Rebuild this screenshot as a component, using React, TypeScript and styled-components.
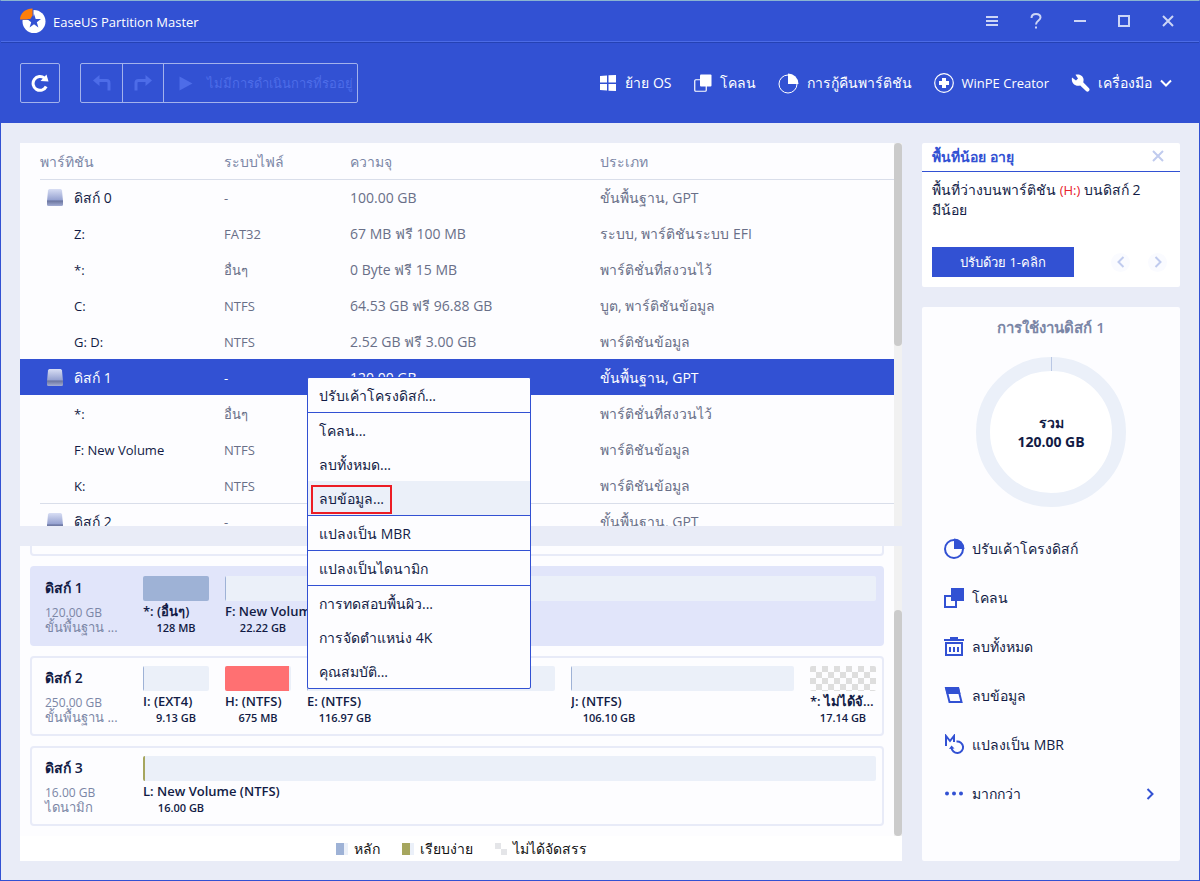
import React from "react";
import styled, { createGlobalStyle, css } from "styled-components";

const color = {
  brand: "#3251d3",
  canvas: "#e9ecf7",
  panel: "#fdfdff",
  track: "#ebf0f9",
  ink: "#121b45",
  body: "#696f88",
  muted: "#7b86a6",
  line: "#d9deea",
  used: "#9eb2d6",
  simple: "#a6a65e",
  warn: "#ff7072",
};

const GlobalStyle = createGlobalStyle`
  *, *::before, *::after { box-sizing: border-box; }
  body {
    margin: 0;
    font-family: "Open Sans", "Noto Sans", sans-serif;
    font-size: 13px;
    line-height: 20px;
    color: ${color.ink};
  }
  button { font: inherit; color: inherit; background: none; border: 0; padding: 0; cursor: pointer; }
`;

const Window = styled.div`
  min-height: 100vh;
  display: flex;
  flex-direction: column;
  background: ${color.canvas};
  border: 1px solid ${color.brand};
  border-top-color: #8ab4d0;
`;

const TitleBar = styled.header`
  display: flex;
  align-items: center;
  height: 41px;
  padding: 0 9px 0 19px;
  background: ${color.brand};
  border-bottom: 1px solid #4c6be6;
  color: #fff;
`;

const AppName = styled.h1`
  flex: 1;
  margin: 1px 0 0 7px;
  font-size: 13px;
  font-weight: 400;
`;

const WindowButton = styled.button`
  display: flex;
  align-items: center;
  justify-content: center;
  width: 44px;
  height: 40px;
`;

const Toolbar = styled.div`
  display: flex;
  align-items: center;
  justify-content: space-between;
  height: 81px;
  padding: 0 27px 0 19px;
  background: ${color.brand};
  border-top: 1px solid #2542b4;
  color: #fff;
`;

const ToolGroup = styled.div`
  display: flex;
  align-items: center;
  gap: 20px;
`;

const NavGroup = styled.nav`
  display: flex;
  align-items: center;
  gap: 22px;
`;

const outline = css`
  border: 1px solid #a3b2ec;
  border-radius: 2px;
`;

const RefreshButton = styled.button`
  ${outline}
  display: flex;
  align-items: center;
  justify-content: center;
  width: 40px;
  height: 40px;
`;

const PendingGroup = styled.div`
  ${outline}
  display: flex;
  height: 40px;
  color: #4d6ce8;
  & > * + * { border-left: 1px solid #a3b2ec; }
`;

const PendingButton = styled.button`
  display: flex;
  align-items: center;
  justify-content: center;
  width: 41px;
`;

const ExecuteButton = styled.button`
  display: flex;
  align-items: center;
  gap: 14px;
  width: 194px;
  padding-left: 15px;
  white-space: nowrap;
`;

const NavButton = styled.button<{ $latin?: boolean }>`
  display: flex;
  align-items: center;
  gap: 8px;
  font-size: ${(p) => (p.$latin ? "13px" : "14px")};
  white-space: nowrap;
`;

const Content = styled.main`
  flex: 1;
  display: flex;
  gap: 20px;
  padding: 20px 19px 19px;
`;

const Workspace = styled.div`
  position: relative;
  flex: 1;
  min-width: 0;
  display: flex;
  flex-direction: column;
  gap: 20px;
`;

const ListPanel = styled.section`
  display: flex;
  height: 383px;
  overflow: hidden;
  background: ${color.panel};
`;

const PartitionTable = styled.table`
  flex: 1;
  align-self: flex-start;
  table-layout: fixed;
  border-collapse: collapse;
  text-align: left;
  th, td { padding: 0; font-weight: 400; }
`;

const Column = styled.col<{ $width?: number }>`
  width: ${(p) => (p.$width ? `${p.$width}px` : "auto")};
`;

const Cell = styled.div<{ $first?: boolean; $line?: boolean; $size?: number }>`
  display: flex;
  align-items: center;
  height: 36px;
  margin-left: ${(p) => (p.$first ? "20px" : "0")};
  border-top: 1px solid ${(p) => (p.$line ? color.line : "transparent")};
  font-size: ${(p) => p.$size ?? 13}px;
  white-space: nowrap;
`;

const HeadCell = styled(Cell)`
  font-size: 14px;
  color: ${color.muted};
`;

const Row = styled.tr<{ $selected?: boolean }>`
  color: ${color.body};
  th { color: ${color.ink}; }
  ${(p) =>
    p.$selected &&
    css`
      background: ${color.brand};
      &, th { color: #fff; }
      ${Cell} { border-top-color: transparent; }
    `}
`;

const IconSlot = styled.span`
  display: flex;
  justify-content: center;
  width: 34px;
  padding-right: 4px;
`;

const ScrollTrack = styled.div<{ $end?: boolean }>`
  display: flex;
  flex-direction: column;
  justify-content: ${(p) => (p.$end ? "flex-end" : "flex-start")};
  width: 8px;
  background: #f1f1f1;
`;

const ScrollThumb = styled.div<{ $share: number }>`
  height: ${(p) => p.$share}%;
  border-radius: 4px;
  background: #cbcbcb;
`;

const MapPanel = styled.section`
  flex: 1;
  display: flex;
  flex-direction: column;
  background: ${color.panel};
`;

const MapScroller = styled.div`
  flex: 1 0 290px;
  height: 290px;
  display: flex;
`;

const MapList = styled.div`
  flex: 1;
  min-width: 0;
  display: flex;
  flex-direction: column;
  justify-content: flex-end;
  gap: 10px;
  padding: 0 10px 10px;
  overflow: hidden;
`;

const DiskCard = styled.article<{ $selected?: boolean }>`
  flex: none;
  display: flex;
  height: 80px;
  padding: 8px 6px 8px 13px;
  border: 2px solid ${(p) => (p.$selected ? "#e1e5fa" : "#e8ebf8")};
  border-radius: 4px;
  background: ${(p) => (p.$selected ? "#e1e5fa" : color.panel)};
`;

const DiskInfo = styled.div`
  width: 98px;
  line-height: 15px;
  color: ${color.muted};
  white-space: nowrap;
`;

const DiskName = styled.h3`
  margin: 2px 0 7px;
  font-size: 14px;
  line-height: 20px;
  font-weight: 600;
  color: ${color.ink};
`;

const DiskSize = styled.div`
  font-size: 12px;
`;

const Bars = styled.div`
  flex: 1;
  min-width: 0;
  display: flex;
  gap: 16px;
`;

const Volume = styled.div<{ $grow?: number }>`
  flex: ${(p) => (p.$grow ? `${p.$grow} 1 0` : "0 0 66px")};
  min-width: 0;
  font-weight: 600;
  line-height: 16px;
`;

const VolumeBar = styled.div<{ $empty?: boolean }>`
  height: 25px;
  margin-bottom: 2px;
  border-radius: 2px;
  overflow: hidden;
  background: ${(p) =>
    p.$empty
      ? "repeating-conic-gradient(#fdfdff 0 25%, #dedede 0 50%) 0 0 / 12px 12px"
      : color.track};
`;

const VolumeFill = styled.div`
  height: 100%;
`;

const VolumeName = styled.div`
  overflow: hidden;
  text-overflow: ellipsis;
  white-space: nowrap;
`;

const VolumeSize = styled.div`
  max-width: 76px;
  font-size: 11px;
  line-height: 18px;
  text-align: center;
  white-space: nowrap;
`;

const Legend = styled.ul`
  display: flex;
  align-items: center;
  justify-content: center;
  gap: 22px;
  height: 25px;
  margin: 0;
  padding: 0;
  background: #fff;
  list-style: none;
  font-size: 14px;
  color: #111;
`;

const LegendItem = styled.li`
  display: flex;
  align-items: center;
  gap: 6px;
`;

const Menu = styled.div`
  position: absolute;
  left: 287px;
  top: 234px;
  width: 224px;
  border: 1px solid ${color.brand};
  border-radius: 2px;
  background: ${color.panel};
  font-size: 14px;
`;

const MenuItem = styled.button<{ $active?: boolean; $divided?: boolean }>`
  display: flex;
  align-items: center;
  width: 100%;
  height: ${(p) => (p.$divided ? "35px" : "34px")};
  padding: 2px 11px 0;
  text-align: left;
  white-space: nowrap;
  border-bottom: ${(p) => (p.$divided ? `1px solid ${color.brand}` : "0")};
  background: ${(p) => (p.$active ? color.track : "none")};
`;

const Marked = styled.span`
  height: 29px;
  margin: 1px 0 0 -8px;
  padding: 2px 6px;
  border: 2px solid #ec1c24;
`;

const Sidebar = styled.aside`
  width: 258px;
  display: flex;
  flex-direction: column;
  gap: 20px;
`;

const Notice = styled.section`
  height: 144px;
  border-radius: 2px;
  background: #fff;
`;

const NoticeHead = styled.div`
  display: flex;
  align-items: center;
  justify-content: space-between;
  height: 29px;
  padding: 0 16px 0 10px;
  border-bottom: 1px solid ${color.brand};
`;

const NoticeTitle = styled.h2`
  margin: 0;
  font-size: 14px;
  font-weight: 600;
  color: ${color.brand};
`;

const NoticeText = styled.p`
  height: 56px;
  margin: 8px 10px 11px;
  padding-right: 28px;
  font-size: 14px;
  line-height: 19px;
`;

const Alert = styled.span`
  font-size: 13px;
  color: #e8202a;
`;

const NoticeActions = styled.div`
  display: flex;
  align-items: center;
  gap: 18px;
  padding: 0 12px 0 10px;
`;

const FixButton = styled.button`
  width: 142px;
  height: 30px;
  margin-right: 19px;
  background: ${color.brand};
  color: #fff;
`;

const RoundButton = styled.button`
  display: flex;
  align-items: center;
  justify-content: center;
  width: 19px;
  height: 19px;
  border-radius: 50%;
  background: #fafbff;
`;

const UsagePanel = styled.section`
  flex: 1;
  padding: 10px 0 0;
  border-radius: 2px;
  background: ${color.panel};
`;

const UsageTitle = styled.h2`
  margin: 0 0 20px;
  font-size: 15px;
  font-weight: 600;
  text-align: center;
  color: ${color.muted};
`;

const RingBox = styled.div`
  display: grid;
  justify-content: center;
  margin-bottom: 17px;
  & > * { grid-area: 1 / 1; }
`;

const RingText = styled.div`
  align-self: center;
  font-size: 14px;
  font-weight: 700;
  line-height: 19px;
  text-align: center;
`;

const ActionButton = styled.button`
  display: flex;
  align-items: center;
  gap: 7px;
  width: 100%;
  height: 49px;
  padding: 0 24px 0 22px;
  font-size: 14px;
`;

const ActionLabel = styled.span`
  flex: 1;
  text-align: left;
`;

const Logo = () => (
  <svg width="26" height="26" viewBox="0 0 26 26" aria-hidden="true">
    <circle cx="14" cy="13.500" r="11.500" fill="#fff" />
    <path d="M-1-1H13.500V12H-1Z" fill={color.brand} />
    <path d="M0 11.500C0 5.500 5 .5 12.500 .5V7.500L10 11.500Z" fill="#ff7f0a" />
    <path d="M14 6L15.700 11H21L16.800 14.200L18.400 19.400L14 16.300L9.600 19.400L11.200 14.200L7 11H12.300Z" fill={color.brand} />
  </svg>
);

const DiskIcon = () => (
  <svg width="16" height="17" viewBox="0 0 16 17" aria-hidden="true">
    <defs>
      <linearGradient id="disk-top" x1="0" y1="0" x2="0" y2="1">
        <stop offset="0" stopColor="#d8def4" />
        <stop offset="1" stopColor="#8f9ccd" />
      </linearGradient>
      <linearGradient id="disk-front" x1="0" y1="0" x2="0" y2="1">
        <stop offset="0" stopColor="#66709a" />
        <stop offset="1" stopColor="#a3add4" />
      </linearGradient>
    </defs>
    <path d="M2.500 0H13.500Q14.800 0 15 1.500L16 12H0L1 1.500Q1.200 0 2.500 0Z" fill="url(#disk-top)" />
    <path d="M0 11.500H16V15.500Q16 17 14.500 17H1.500Q0 17 0 15.500Z" fill="url(#disk-front)" />
  </svg>
);

const Chevron = ({ dir, tone, size = 12 }: { dir: "left" | "right" | "down"; tone: string; size?: number }) => (
  <svg width={size} height={size} viewBox="0 0 12 12" fill="none" stroke={tone} strokeWidth="2" aria-hidden="true">
    <path d={dir === "left" ? "M8.500 1L3.500 6L8.500 11" : dir === "right" ? "M3.500 1L8.500 6L3.500 11" : "M1 3.500L6 8.500L11 3.500"} />
  </svg>
);

const Cross = ({ tone, size, weight }: { tone: string; size: number; weight: number }) => (
  <svg width={size} height={size} viewBox="0 0 12 12" stroke={tone} strokeWidth={weight} aria-hidden="true">
    <path d="M1 1L11 11M11 1L1 11" />
  </svg>
);

const PieIcon = ({ tone, weight }: { tone: string; weight: number }) => (
  <svg width="21" height="21" viewBox="0 0 21 21" aria-hidden="true">
    <circle cx="10" cy="11" r="9" fill="none" stroke={tone} strokeWidth={weight} />
    <path d="M10 11V0.500A10.500 10.500 0 0 1 20.500 11Z" fill={tone} />
  </svg>
);

const sideIcons = {
  adjust: <PieIcon tone={color.brand} weight={2} />,
  clone: (
    <svg width="21" height="21" viewBox="0 0 21 21" aria-hidden="true">
      <path d="M1 9H12V20H1Z" fill="none" stroke={color.brand} strokeWidth="2" />
      <path d="M7 1H20V14H7Z" fill={color.brand} />
    </svg>
  ),
  trash: (
    <svg width="21" height="21" viewBox="0 0 21 21" fill={color.brand} aria-hidden="true">
      <path d="M6 1H14V3H20V5H0V3H6Z" />
      <path d="M1 6H19V20H1ZM3 8V18H17V8Z" fillRule="evenodd" />
      <path d="M5 11H7V16H5ZM9 11H11V16H9ZM13 11H15V16H13Z" />
    </svg>
  ),
  wipe: (
    <svg width="21" height="21" viewBox="0 0 21 21" aria-hidden="true">
      <path d="M2 3H14L17.500 17H5.500Z" fill="none" stroke={color.brand} strokeWidth="2" />
      <path d="M1 2H15L16.500 9H2.700Z" fill={color.brand} />
    </svg>
  ),
  convert: (
    <svg width="21" height="21" viewBox="0 0 21 21" fill="none" stroke={color.brand} strokeWidth="2" aria-hidden="true">
      <path d="M2 12V2L6 7L10 2V8" strokeWidth="2" />
      <path d="M12.500 7.500A5.800 5.800 0 1 1 7.500 13.500" />
      <path d="M5 15L7.500 11.500L10.500 14.500Z" fill={color.brand} stroke="none" />
    </svg>
  ),
  more: (
    <svg width="21" height="21" viewBox="0 0 21 21" fill={color.brand} aria-hidden="true">
      <circle cx="3" cy="10.500" r="2" />
      <circle cx="10" cy="10.500" r="2" />
      <circle cx="17" cy="10.500" r="2" />
    </svg>
  ),
};

const WINDOW_TONE = "#ccd5f6";

const windowControls = [
  {
    label: "Menu",
    icon: (
      <svg width="12" height="12" viewBox="0 0 12 12" fill={WINDOW_TONE} aria-hidden="true">
        <path d="M0 1H12V3H0ZM0 5H12V7H0ZM0 9H12V11H0Z" />
      </svg>
    ),
  },
  {
    label: "Help",
    icon: (
      <svg width="12" height="16" viewBox="0 0 12 16" fill="none" stroke={WINDOW_TONE} strokeWidth="2" aria-hidden="true">
        <path d="M1.500 5C1.500 2.500 3.300 1 6 1S10.500 2.500 10.500 4.600C10.500 7.500 6 7.500 6 11.500M6 13.500V15.500" />
      </svg>
    ),
  },
  {
    label: "Minimize",
    icon: (
      <svg width="12" height="12" viewBox="0 0 12 12" fill={WINDOW_TONE} aria-hidden="true">
        <path d="M0 5H12V7H0Z" />
      </svg>
    ),
  },
  {
    label: "Maximize",
    icon: (
      <svg width="12" height="12" viewBox="0 0 12 12" fill="none" stroke={WINDOW_TONE} strokeWidth="2" aria-hidden="true">
        <path d="M1 1H11V11H1Z" />
      </svg>
    ),
  },
  { label: "Close", icon: <Cross tone={WINDOW_TONE} size={12} weight={2} /> },
];

const navItems = [
  {
    label: "ย้าย OS",
    icon: (
      <svg width="18" height="18" viewBox="0 0 18 18" fill="#fff" aria-hidden="true">
        <path d="M1 2L8 1.500V8.500H1ZM9.500 1.300L17 1V8.500H9.500ZM1 10H8V16.500L1 16ZM9.500 10H17V17L9.500 16.700Z" />
      </svg>
    ),
  },
  {
    label: "โคลน",
    icon: (
      <svg width="18" height="18" viewBox="0 0 18 18" aria-hidden="true">
        <rect x="0.750" y="5.750" width="11.500" height="11.500" rx="1" fill="none" stroke="#fff" strokeWidth="1.200" />
        <rect x="6" y="0.500" width="11.500" height="12" rx="1" fill="#fff" />
      </svg>
    ),
  },
  { label: "การกู้คืนพาร์ติชัน", icon: <PieIcon tone="#fff" weight={1} /> },
  {
    label: "WinPE Creator",
    latin: true,
    icon: (
      <svg width="20" height="20" viewBox="0 0 20 20" aria-hidden="true">
        <circle cx="10" cy="10" r="9.300" fill="none" stroke="#fff" strokeWidth="1.200" />
        <path d="M8 5H12V8H15V12H12V15H8V12H5V8H8Z" fill="#fff" />
      </svg>
    ),
  },
  {
    label: "เครื่องมือ",
    dropdown: true,
    icon: (
      <svg width="19" height="18" viewBox="0 0 19 18" aria-hidden="true">
        <path d="M1 3.500L5 6.500L7 4.500L4.500 .8C8 -.3 12 1.500 12.500 5C12.700 6.300 12.500 7.300 12.200 8.200L17.800 14A2 2 0 0 1 15 17L9.200 11.500C4.500 13 -.2 9.500 1 3.500Z" fill="#fff" />
      </svg>
    ),
  },
];

type Entry = { name: string; fs: string; size: string; type: string; disk?: boolean; selected?: boolean };

const entries: Entry[] = [
  { name: "ดิสก์ 0", fs: "-", size: "100.00 GB", type: "ขั้นพื้นฐาน, GPT", disk: true },
  { name: "Z:", fs: "FAT32", size: "67 MB ฟรี 100 MB", type: "ระบบ, พาร์ติชันระบบ EFI" },
  { name: "*:", fs: "อื่นๆ", size: "0 Byte ฟรี 15 MB", type: "พาร์ติชั่นที่สงวนไว้" },
  { name: "C:", fs: "NTFS", size: "64.53 GB ฟรี 96.88 GB", type: "บูต, พาร์ติชันข้อมูล" },
  { name: "G: D:", fs: "NTFS", size: "2.52 GB ฟรี 3.00 GB", type: "พาร์ติชันข้อมูล" },
  { name: "ดิสก์ 1", fs: "-", size: "120.00 GB", type: "ขั้นพื้นฐาน, GPT", disk: true, selected: true },
  { name: "*:", fs: "อื่นๆ", size: "128 MB", type: "พาร์ติชั่นที่สงวนไว้" },
  { name: "F: New Volume", fs: "NTFS", size: "22.22 GB", type: "พาร์ติชันข้อมูล" },
  { name: "K:", fs: "NTFS", size: "97.65 GB", type: "พาร์ติชันข้อมูล" },
  { name: "ดิสก์ 2", fs: "-", size: "250.00 GB", type: "ขั้นพื้นฐาน, GPT", disk: true },
];

type Vol = { name: string; size: string; grow?: number; fill?: string; used?: string; empty?: boolean };
type Disk = { name: string; size: string; kind: string; selected?: boolean; volumes: Vol[] };

const disks: Disk[] = [
  { name: "ดิสก์ 0", size: "100.00 GB", kind: "ขั้นพื้นฐาน ...", volumes: [{ name: "C: (NTFS)", size: "96.88 GB", grow: 1, used: "33%" }] },
  {
    name: "ดิสก์ 1",
    size: "120.00 GB",
    kind: "ขั้นพื้นฐาน ...",
    selected: true,
    volumes: [
      { name: "*: (อื่นๆ)", size: "128 MB", used: "100%" },
      { name: "F: New Volume (NTFS)", size: "22.22 GB", grow: 22, used: "1px" },
      { name: "K: (NTFS)", size: "97.65 GB", grow: 98, used: "1px" },
    ],
  },
  {
    name: "ดิสก์ 2",
    size: "250.00 GB",
    kind: "ขั้นพื้นฐาน ...",
    volumes: [
      { name: "I: (EXT4)", size: "9.13 GB", used: "1px" },
      { name: "H: (NTFS)", size: "675 MB", used: "97%", fill: color.warn },
      { name: "E: (NTFS)", size: "116.97 GB", grow: 248, used: "1px" },
      { name: "J: (NTFS)", size: "106.10 GB", grow: 223, used: "1px" },
      { name: "*: ไม่ได้จัดสรร", size: "17.14 GB", empty: true },
    ],
  },
  {
    name: "ดิสก์ 3",
    size: "16.00 GB",
    kind: "ไดนามิก",
    volumes: [{ name: "L: New Volume (NTFS)", size: "16.00 GB", grow: 1, used: "2px", fill: color.simple }],
  },
];

const menuItems = [
  { label: "ปรับเค้าโครงดิสก์...", divided: true },
  { label: "โคลน..." },
  { label: "ลบทั้งหมด..." },
  { label: "ลบข้อมูล...", active: true, divided: true },
  { label: "แปลงเป็น MBR", divided: true },
  { label: "แปลงเป็นไดนามิก", divided: true },
  { label: "การทดสอบพื้นผิว..." },
  { label: "การจัดตำแหน่ง 4K" },
  { label: "คุณสมบัติ..." },
];

const actions = [
  { label: "ปรับเค้าโครงดิสก์", icon: sideIcons.adjust },
  { label: "โคลน", icon: sideIcons.clone },
  { label: "ลบทั้งหมด", icon: sideIcons.trash },
  { label: "ลบข้อมูล", icon: sideIcons.wipe },
  { label: "แปลงเป็น MBR", icon: sideIcons.convert },
  { label: "มากกว่า", icon: sideIcons.more, more: true },
];

const Swatch = ({ tone }: { tone: string }) => (
  <svg width="12" height="12" viewBox="0 0 12 12" aria-hidden="true">
    <path d="M0 0H12V12H0Z" fill={color.track} />
    <path d="M0 0H8V12H0Z" fill={tone} />
  </svg>
);

export default function App() {
  return (
    <Window>
      <GlobalStyle />
      <TitleBar>
        <Logo />
        <AppName>EaseUS Partition Master</AppName>
        {windowControls.map((c) => (
          <WindowButton key={c.label} aria-label={c.label}>
            {c.icon}
          </WindowButton>
        ))}
      </TitleBar>
      <Toolbar>
        <ToolGroup>
          <RefreshButton aria-label="Refresh">
            <svg width="18" height="18" viewBox="0 0 18 18" aria-hidden="true">
              <path d="M15.200 12.500A6.900 6.900 0 1 1 13.500 4.200" fill="none" stroke="#fff" strokeWidth="3" />
              <path d="M15.500 .5L17.500 7.500L9.500 7Z" fill="#fff" />
            </svg>
          </RefreshButton>
          <PendingGroup>
            <PendingButton aria-label="Undo">
              <svg width="18" height="18" viewBox="0 0 18 18" aria-hidden="true">
                <path d="M5 6.500H13.500Q16 6.500 16 9V16.500" fill="none" stroke="currentColor" strokeWidth="3" />
                <path d="M0 6.500L6.500 1V12Z" fill="currentColor" />
              </svg>
            </PendingButton>
            <PendingButton aria-label="Redo">
              <svg width="18" height="18" viewBox="0 0 18 18" aria-hidden="true">
                <path d="M13 6.500H4.500Q2 6.500 2 9V16.500" fill="none" stroke="currentColor" strokeWidth="3" />
                <path d="M18 6.500L11.500 1V12Z" fill="currentColor" />
              </svg>
            </PendingButton>
            <ExecuteButton>
              <svg width="14" height="15" viewBox="0 0 14 15" aria-hidden="true">
                <path d="M0.500 0.500L13.500 7.500L0.500 14.500Z" fill="currentColor" />
              </svg>
              ไม่มีการดำเนินการที่รออยู่
            </ExecuteButton>
          </PendingGroup>
        </ToolGroup>
        <NavGroup>
          {navItems.map((n) => (
            <NavButton key={n.label} $latin={n.latin}>
              {n.icon}
              {n.label}
              {n.dropdown && <Chevron dir="down" tone="#fff" />}
            </NavButton>
          ))}
        </NavGroup>
      </Toolbar>
      <Content>
        <Workspace>
          <ListPanel>
            <PartitionTable>
              <colgroup>
                <Column $width={204} />
                <Column $width={126} />
                <Column $width={250} />
                <Column />
              </colgroup>
              <thead>
                <tr>
                  <th scope="col"><HeadCell $first>พาร์ทิชัน</HeadCell></th>
                  <th scope="col"><HeadCell>ระบบไฟล์</HeadCell></th>
                  <th scope="col"><HeadCell>ความจุ</HeadCell></th>
                  <th scope="col"><HeadCell>ประเภท</HeadCell></th>
                </tr>
              </thead>
              <tbody>
                {entries.map((e, i) => (
                  <Row key={i} $selected={e.selected}>
                    <th scope="row">
                      <Cell $first $line={e.disk} $size={e.disk ? 14 : 13}>
                        <IconSlot>{e.disk && <DiskIcon />}</IconSlot>
                        {e.name}
                      </Cell>
                    </th>
                    <td><Cell $line={e.disk}>{e.fs}</Cell></td>
                    <td><Cell $line={e.disk} $size={14}>{e.size}</Cell></td>
                    <td><Cell $line={e.disk} $size={14}>{e.type}</Cell></td>
                  </Row>
                ))}
              </tbody>
            </PartitionTable>
            <ScrollTrack>
              <ScrollThumb $share={53} />
            </ScrollTrack>
          </ListPanel>
          <MapPanel>
            <MapScroller>
              <MapList>
                {disks.map((d) => (
                  <DiskCard key={d.name} $selected={d.selected}>
                    <DiskInfo>
                      <DiskName>{d.name}</DiskName>
                      <DiskSize>{d.size}</DiskSize>
                      <div>{d.kind}</div>
                    </DiskInfo>
                    <Bars>
                      {d.volumes.map((v) => (
                        <Volume key={v.name} $grow={v.grow}>
                          <VolumeBar $empty={v.empty}>
                            {v.used && <VolumeFill style={{ width: v.used, background: v.fill ?? color.used }} />}
                          </VolumeBar>
                          <VolumeName>{v.name}</VolumeName>
                          <VolumeSize>{v.size}</VolumeSize>
                        </Volume>
                      ))}
                    </Bars>
                  </DiskCard>
                ))}
              </MapList>
              <ScrollTrack $end>
                <ScrollThumb $share={78} />
              </ScrollTrack>
            </MapScroller>
            <Legend>
              <LegendItem><Swatch tone={color.used} />หลัก</LegendItem>
              <LegendItem><Swatch tone={color.simple} />เรียบง่าย</LegendItem>
              <LegendItem>
                <svg width="12" height="12" viewBox="0 0 12 12" aria-hidden="true">
                  <path d="M0 0H6V6H12V12H6V6H0Z" fill="#e4e5e8" />
                </svg>
                ไม่ได้จัดสรร
              </LegendItem>
            </Legend>
          </MapPanel>
          <Menu role="menu">
            {menuItems.map((m) => (
              <MenuItem key={m.label} role="menuitem" $active={m.active} $divided={m.divided}>
                {m.active ? <Marked>{m.label}</Marked> : m.label}
              </MenuItem>
            ))}
          </Menu>
        </Workspace>
        <Sidebar>
          <Notice>
            <NoticeHead>
              <NoticeTitle>พื้นที่น้อย อายุ</NoticeTitle>
              <button aria-label="Dismiss">
                <Cross tone="#c0cbee" size={12} weight={2} />
              </button>
            </NoticeHead>
            <NoticeText>
              พื้นที่ว่างบนพาร์ติชัน <Alert>(H:)</Alert> บนดิสก์ 2 มีน้อย
            </NoticeText>
            <NoticeActions>
              <FixButton>ปรับด้วย 1-คลิก</FixButton>
              <RoundButton aria-label="Previous"><Chevron dir="left" tone="#c0cbee" /></RoundButton>
              <RoundButton aria-label="Next"><Chevron dir="right" tone="#c0cbee" /></RoundButton>
            </NoticeActions>
          </Notice>
          <UsagePanel>
            <UsageTitle>การใช้งานดิสก์ 1</UsageTitle>
            <RingBox>
              <svg width="150" height="150" viewBox="0 0 150 150" aria-hidden="true">
                <circle cx="75" cy="75" r="68" fill="#fff" stroke={color.track} strokeWidth="14" />
                <path d="M75 0H76V14H75Z" fill="#b9c7e4" />
              </svg>
              <RingText>
                รวม
                <br />
                120.00 GB
              </RingText>
            </RingBox>
            {actions.map((a) => (
              <ActionButton key={a.label}>
                {a.icon}
                <ActionLabel>{a.label}</ActionLabel>
                {a.more && <Chevron dir="right" tone={color.brand} />}
              </ActionButton>
            ))}
          </UsagePanel>
        </Sidebar>
      </Content>
    </Window>
  );
}
